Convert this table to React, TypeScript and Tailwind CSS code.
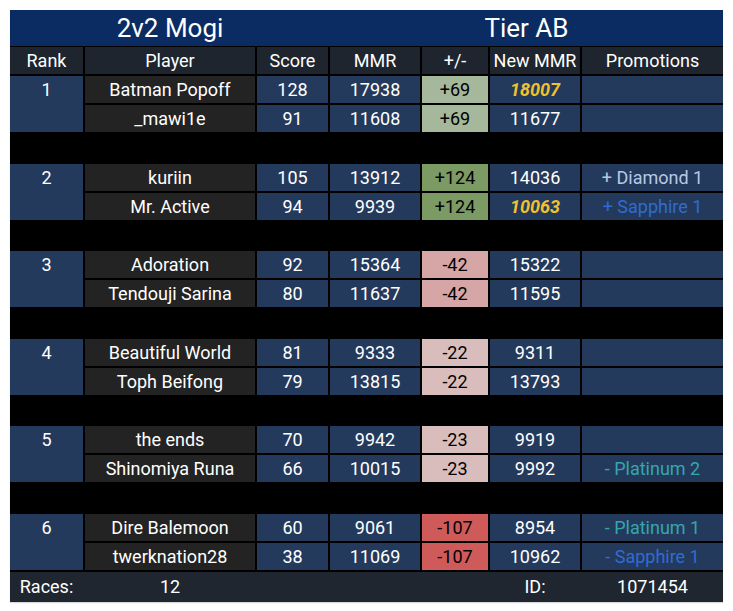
const COLS = "grid grid-cols-[73px_170px_71px_90px_66px_90px_141px] gap-x-[2px]";

type Player = {
  name: string;
  score: number;
  mmr: number;
  delta: string;
  newMmr: number;
  peak?: boolean;
  promo?: { text: string; color: string };
};

type Group = { rank: number; deltaBg: string; players: Player[] };

const GROUPS: Group[] = [
  {
    rank: 1,
    deltaBg: "bg-[#a6b89c]",
    players: [
      { name: "Batman Popoff", score: 128, mmr: 17938, delta: "+69", newMmr: 18007, peak: true },
      { name: "_mawi1e", score: 91, mmr: 11608, delta: "+69", newMmr: 11677 },
    ],
  },
  {
    rank: 2,
    deltaBg: "bg-[#7b9a64]",
    players: [
      { name: "kuriin", score: 105, mmr: 13912, delta: "+124", newMmr: 14036, promo: { text: "+ Diamond 1", color: "text-[#b7c8e4]" } },
      { name: "Mr. Active", score: 94, mmr: 9939, delta: "+124", newMmr: 10063, peak: true, promo: { text: "+ Sapphire 1", color: "text-[#2f6bd3]" } },
    ],
  },
  {
    rank: 3,
    deltaBg: "bg-[#d6a6a6]",
    players: [
      { name: "Adoration", score: 92, mmr: 15364, delta: "-42", newMmr: 15322 },
      { name: "Tendouji Sarina", score: 80, mmr: 11637, delta: "-42", newMmr: 11595 },
    ],
  },
  {
    rank: 4,
    deltaBg: "bg-[#d9bcbc]",
    players: [
      { name: "Beautiful World", score: 81, mmr: 9333, delta: "-22", newMmr: 9311 },
      { name: "Toph Beifong", score: 79, mmr: 13815, delta: "-22", newMmr: 13793 },
    ],
  },
  {
    rank: 5,
    deltaBg: "bg-[#d9bdbd]",
    players: [
      { name: "the ends", score: 70, mmr: 9942, delta: "-23", newMmr: 9919 },
      { name: "Shinomiya Runa", score: 66, mmr: 10015, delta: "-23", newMmr: 9992, promo: { text: "- Platinum 2", color: "text-[#35a6ac]" } },
    ],
  },
  {
    rank: 6,
    deltaBg: "bg-[#cf5a5a]",
    players: [
      { name: "Dire Balemoon", score: 60, mmr: 9061, delta: "-107", newMmr: 8954, promo: { text: "- Platinum 1", color: "text-[#35a6ac]" } },
      { name: "twerknation28", score: 38, mmr: 11069, delta: "-107", newMmr: 10962, promo: { text: "- Sapphire 1", color: "text-[#2f6bd3]" } },
    ],
  },
];

const HEADERS = ["Rank", "Player", "Score", "MMR", "+/-", "New MMR", "Promotions"];

const cell = "flex items-center justify-center whitespace-nowrap";

function GroupRows({ g }: { g: Group }) {
  return (
    <div className={`${COLS} grid-rows-[27px_27px] gap-y-[2px]`}>
      <div className="row-span-2 bg-[#243a5c] flex justify-center">
        <span className="h-[27px] flex items-center">{g.rank}</span>
      </div>
      {g.players.map((p) => (
        <div key={p.name} className="contents">
          <div className={`${cell} bg-[#232323]`}>{p.name}</div>
          <div className={`${cell} bg-[#243a5c]`}>{p.score}</div>
          <div className={`${cell} bg-[#243a5c]`}>{p.mmr}</div>
          <div className={`${cell} ${g.deltaBg} text-black`}>{p.delta}</div>
          <div className={`${cell} bg-[#243a5c]`}>
            {p.peak ? <span className="font-bold italic text-[#f2c12e]">{p.newMmr}</span> : p.newMmr}
          </div>
          <div className={`${cell} bg-[#243a5c]`}>
            {p.promo && <span className={p.promo.color}>{p.promo.text}</span>}
          </div>
        </div>
      ))}
    </div>
  );
}

export default function App() {
  return (
    <div className="min-h-screen bg-white pt-[10px] pl-[10px] font-['Roboto',sans-serif] text-[18px] text-white">
      <div className="w-[713px] bg-black shadow-[0_1px_1px_rgba(0,0,0,0.15)]">
        <div className="flex h-[36px] bg-[#0b2c62] text-[26px]">
          <div className="w-[320px] flex items-center justify-center">2v2 Mogi</div>
          <div className="flex-1 flex items-center justify-center">Tier AB</div>
        </div>
        <div className="mt-[1px] flex flex-col gap-y-[2px]">
          <div className={`${COLS} h-[27px]`}>
            {HEADERS.map((h) => (
              <div key={h} className={`${cell} bg-[#1e252e]`}>
                {h}
              </div>
            ))}
          </div>
          {GROUPS.map((g, i) => (
            <div key={g.rank} className="flex flex-col gap-y-[2px]">
              {i > 0 && <div className="h-[27.5px]" />}
              <GroupRows g={g} />
            </div>
          ))}
          <div className={`${COLS} h-[30.5px] bg-[#1f262f]`}>
            <div className={cell}>Races:</div>
            <div className={cell}>12</div>
            <div />
            <div />
            <div />
            <div className={cell}>ID:</div>
            <div className={cell}>1071454</div>
          </div>
        </div>
      </div>
    </div>
  );
}
